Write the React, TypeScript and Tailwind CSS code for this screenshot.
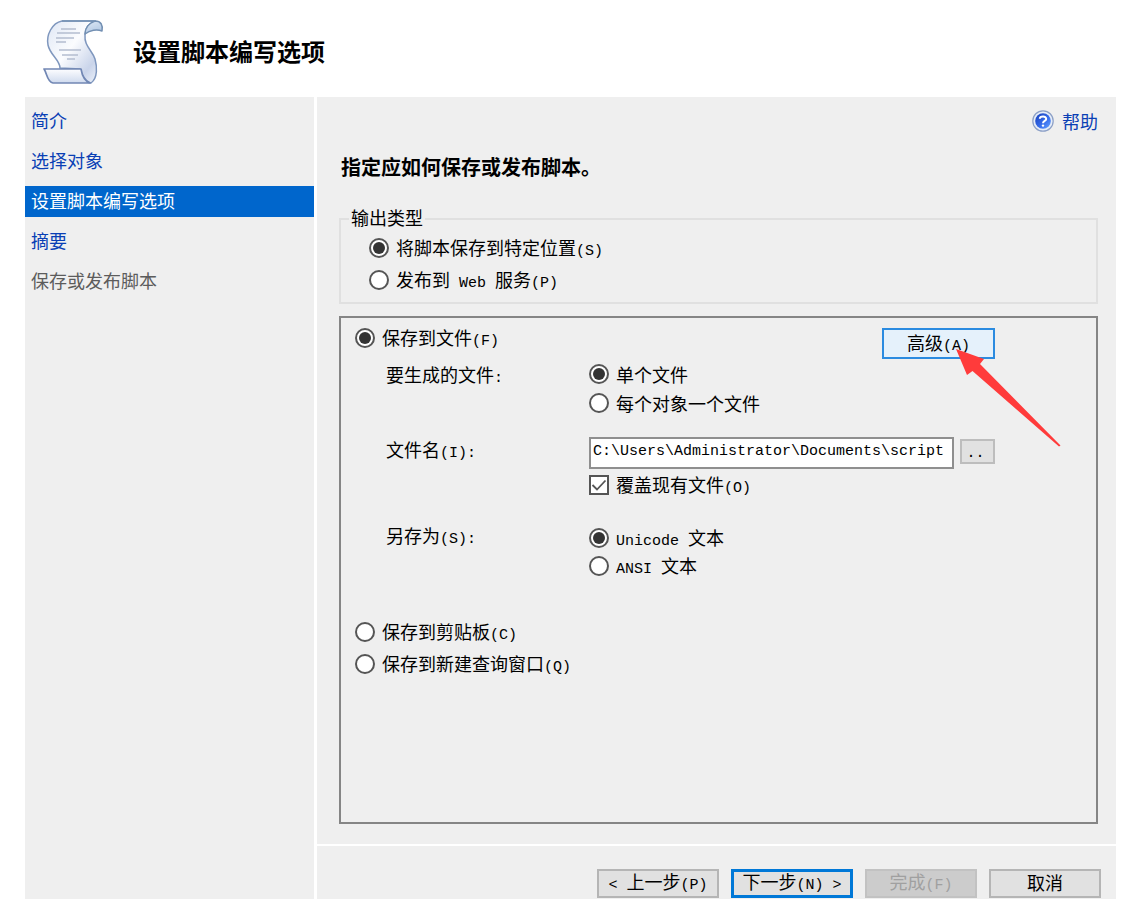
import { useState } from 'react';
import type { ReactNode } from 'react';

const steps = [
  { title: '简介', state: 'link' },
  { title: '选择对象', state: 'link' },
  { title: '设置脚本编写选项', state: 'current' },
  { title: '摘要', state: 'link' },
  { title: '保存或发布脚本', state: 'pending' },
];

const stepStyles: Record<string, string> = {
  link: 'text-[#0a3fb5]',
  current: 'bg-[#0066cc] text-white',
  pending: 'text-[#5c5c5c]',
};

// Latin letters are half the width of the Chinese ones, so they get a smaller size
const Text = ({ children }: { children: string }) => (
  <span className="whitespace-pre">
    {children.split(/([\x20-\x7e]+)/).map((part, index) =>
      index % 2 ? (
        <span key={index} className="font-['Liberation_Mono',monospace] text-[15px] leading-none">{part}</span>
      ) : (
        part
      )
    )}
  </span>
);

type RadioProps = {
  name: string;
  value: string;
  selected: string;
  onSelect: (value: string) => void;
  children: string;
};

const Radio = ({ name, value, selected, onSelect, children }: RadioProps) => (
  <label className="flex h-5 w-fit items-center gap-[7px] leading-5">
    <input
      type="radio"
      name={name}
      checked={selected === value}
      onChange={() => onSelect(value)}
      className="grid size-5 shrink-0 appearance-none place-content-center rounded-full border-2 border-[#555] bg-white checked:before:size-[12px] checked:before:rounded-full checked:before:bg-[#333]"
    />
    <Text>{children}</Text>
  </label>
);

const ScrollIcon = () => (
  <svg viewBox="0 0 62 66" className="h-[66px] w-[62px]" aria-hidden="true">
    <defs>
      <linearGradient id="paper" x1="0" y1="0" x2="1" y2="1">
        <stop offset="0" stopColor="#dfe7f5" />
        <stop offset="0.45" stopColor="#fbfcfe" />
        <stop offset="0.8" stopColor="#c9d4ea" />
        <stop offset="1" stopColor="#eef2fa" />
      </linearGradient>
      <linearGradient id="curl" x1="0" y1="0" x2="1" y2="1">
        <stop offset="0" stopColor="#f4f8fd" />
        <stop offset="1" stopColor="#a9c2e0" />
      </linearGradient>
      <linearGradient id="fold" x1="0" y1="0" x2="0" y2="1">
        <stop offset="0" stopColor="#fdfdff" />
        <stop offset="1" stopColor="#cfdaee" />
      </linearGradient>
    </defs>
    <path
      d="M20 2 C10 4 4 16 6 26 C8 36 18 41 18 49 L38 50 C40 57 43 64 49 64 C56 59 55 47 53 40 C50 31 42 27 43 16 C43 8 48 4 54 2 Z"
      fill="url(#paper)"
      stroke="#7f97be"
      strokeWidth="1.5"
    />
    <path
      d="M20 2 L53 2 C59 2 61 6 60 12 C55 10 48 11 43 15 C43 9 47 4 53 2"
      fill="url(#curl)"
      stroke="#7390b3"
      strokeWidth="1.5"
      strokeLinejoin="round"
    />
    <path
      d="M2 50 L39 50 C40 56 43 62 48 64 L11 64 C5 63 5 54 2 50 Z"
      fill="url(#fold)"
      stroke="#7187b4"
      strokeWidth="1.7"
      strokeLinejoin="round"
    />
    <g stroke="#b4bdcf" strokeWidth="1.3">
      <path d="M19 10 H34 M15 14 H38 M14 19 H32 M14 23 H24 M17 31 H39 M20 36 H36 M25 40 H33" />
    </g>
  </svg>
);

const HelpIcon = () => (
  <svg viewBox="0 0 22 22" className="size-[22px]" aria-hidden="true">
    <defs>
      <linearGradient id="help" x1="0" y1="0" x2="1" y2="1">
        <stop offset="0" stopColor="#163db8" />
        <stop offset="0.6" stopColor="#3970ee" />
        <stop offset="1" stopColor="#69a5ff" />
      </linearGradient>
    </defs>
    <circle cx="11" cy="11" r="10.2" fill="#e6edf8" stroke="#8b9fc6" strokeWidth="1.2" />
    <circle cx="11" cy="11" r="7.8" fill="url(#help)" />
    <path
      d="M7.8 8.8 C8 5.8 14.2 5.6 14.2 8.9 C14.2 11 11 10.8 11 13.2"
      fill="none"
      stroke="#fff"
      strokeWidth="2"
    />
    <circle cx="11" cy="15.6" r="1.2" fill="#fff" />
  </svg>
);

const FooterButton = ({ className, disabled, children }: { className: string; disabled?: boolean; children: ReactNode }) => (
  <button type="button" disabled={disabled} className={`flex h-[29px] items-center justify-center pb-1 leading-5 ${className}`}>
    {children}
  </button>
);

const App = () => {
  const [output, setOutput] = useState('location');
  const [target, setTarget] = useState('file');
  const [files, setFiles] = useState('single');
  const [encoding, setEncoding] = useState('unicode');
  const [overwrite, setOverwrite] = useState(true);

  return (
    <div className="flex min-h-screen flex-col bg-white pr-[22px] pl-[25px] font-['Noto_Sans_CJK_SC',sans-serif] text-[18px] text-black">
      <header className="flex h-[97px] items-center gap-[29px] pt-[7px] pl-[17px]">
        <ScrollIcon />
        <h1 className="pb-[2px] text-2xl font-bold">设置脚本编写选项</h1>
      </header>

      <div className="flex flex-1 gap-[3px]">
        <nav className="flex w-[289px] shrink-0 flex-col gap-[9px] bg-[#efefef] pt-[9px]">
          {steps.map((step) => (
            <a key={step.title} href="#" className={`h-[31px] pl-[6px] leading-[29px] ${stepStyles[step.state]}`}>
              {step.title}
            </a>
          ))}
        </nav>

        <div className="flex min-w-0 flex-1 flex-col gap-[2px]">
          <main className="flex flex-1 flex-col bg-[#efefef] pt-3 pr-[18px] pb-5 pl-[22px]">
            <a href="#" className="flex h-6 items-center gap-2 self-end leading-5 text-[#0a3fb5]">
              <HelpIcon />
              帮助
            </a>
            <h2 className="mt-[22px] pl-[2px] text-xl leading-6 font-bold">指定应如何保存或发布脚本。</h2>

            <fieldset className="mt-7 border-2 border-[#e0e0e0] px-2 pb-3">
              <legend className="px-[2px] pb-1 leading-5">输出类型</legend>
              <div className="flex flex-col gap-3 pt-[7px] pl-5">
                <Radio name="output" value="location" selected={output} onSelect={setOutput}>将脚本保存到特定位置(S)</Radio>
                <Radio name="output" value="web" selected={output} onSelect={setOutput}>发布到 Web 服务(P)</Radio>
              </div>
            </fieldset>

            <section className="mt-3 flex-1 border-2 border-[#858585] pt-[10px] pr-[101px] pb-6 pl-[14px]">
              <div className="flex items-start justify-between">
                <Radio name="target" value="file" selected={target} onSelect={setTarget}>保存到文件(F)</Radio>
                <div className="relative">
                  <button type="button" className="flex h-[31px] w-[113px] items-center justify-center border-2 border-[#2b8be0] bg-[#e5f1fb] pb-[2px] leading-5">
                    <Text>高级(A)</Text>
                  </button>
                  <svg viewBox="0 0 106 98" className="pointer-events-none absolute top-[21px] left-[74px] h-[98px] w-[106px]" aria-hidden="true">
                    <path d="M0 0 L28 10 L24 15 L104.500 96.500 L103 97.500 L16.500 22 L11 26 Z" fill="#ff3b3b" />
                  </svg>
                </div>
              </div>

              <div className="mt-[5px] grid grid-cols-[203px_1fr] pl-[31px] leading-5">
                <div><Text>要生成的文件:</Text></div>
                <div className="flex flex-col gap-[9px]">
                  <Radio name="files" value="single" selected={files} onSelect={setFiles}>单个文件</Radio>
                  <Radio name="files" value="each" selected={files} onSelect={setFiles}>每个对象一个文件</Radio>
                </div>

                <label htmlFor="filename" className="mt-[26px]"><Text>文件名(I):</Text></label>
                <div className="mt-6 flex gap-[6px]">
                  <input
                    id="filename"
                    type="text"
                    defaultValue="C:\Users\Administrator\Documents\script"
                    className="h-8 min-w-0 flex-1 border-2 border-[#8f8f8f] bg-white px-[2px] pb-1 font-['Liberation_Mono',monospace] text-[15px]"
                  />
                  <button type="button" aria-label="浏览" className="mt-[2px] h-[25px] w-[35px] border-2 border-[#bdbdbd] bg-[#e1e1e1] pt-1 pr-1 font-['Liberation_Mono',monospace] text-[15px] leading-4">
                    ..
                  </button>
                </div>

                <label className="col-start-2 mt-[6px] flex h-5 w-fit items-center gap-[7px]">
                  <span className="relative size-5">
                    <input
                      type="checkbox"
                      checked={overwrite}
                      onChange={() => setOverwrite(!overwrite)}
                      className="block size-5 appearance-none border-2 border-[#555] bg-white"
                    />
                    {overwrite && (
                      <svg viewBox="0 0 20 20" className="pointer-events-none absolute inset-0 size-5" aria-hidden="true">
                        <path d="M3.500 10 L8 14.500 L16.500 5.500" fill="none" stroke="#555" strokeWidth="1.8" />
                      </svg>
                    )}
                  </span>
                  <Text>覆盖现有文件(O)</Text>
                </label>

                <div className="mt-[30px]"><Text>另存为(S):</Text></div>
                <div className="mt-[33px] flex flex-col gap-2">
                  <Radio name="encoding" value="unicode" selected={encoding} onSelect={setEncoding}>Unicode 文本</Radio>
                  <Radio name="encoding" value="ansi" selected={encoding} onSelect={setEncoding}>ANSI 文本</Radio>
                </div>
              </div>

              <div className="mt-[46px] flex flex-col gap-3">
                <Radio name="target" value="clipboard" selected={target} onSelect={setTarget}>保存到剪贴板(C)</Radio>
                <Radio name="target" value="query" selected={target} onSelect={setTarget}>保存到新建查询窗口(Q)</Radio>
              </div>
            </section>
          </main>

          <footer className="flex justify-end gap-3 bg-[#efefef] pt-[23px] pr-[15px] pb-px">
            <FooterButton className="w-[122px] border-2 border-[#b5b5b5] bg-[#e1e1e1]"><Text>{'< 上一步(P)'}</Text></FooterButton>
            <FooterButton className="w-[122px] border-3 border-[#0078d7] bg-[#e1e1e1]"><Text>{'下一步(N) >'}</Text></FooterButton>
            <FooterButton disabled className="w-[112px] border-2 border-[#c2c2c2] bg-[#cccccc] text-[#a0a0a0]"><Text>完成(F)</Text></FooterButton>
            <FooterButton className="w-[112px] border-2 border-[#b5b5b5] bg-[#e1e1e1]"><Text>取消</Text></FooterButton>
          </footer>
        </div>
      </div>
    </div>
  );
};

export default App;
